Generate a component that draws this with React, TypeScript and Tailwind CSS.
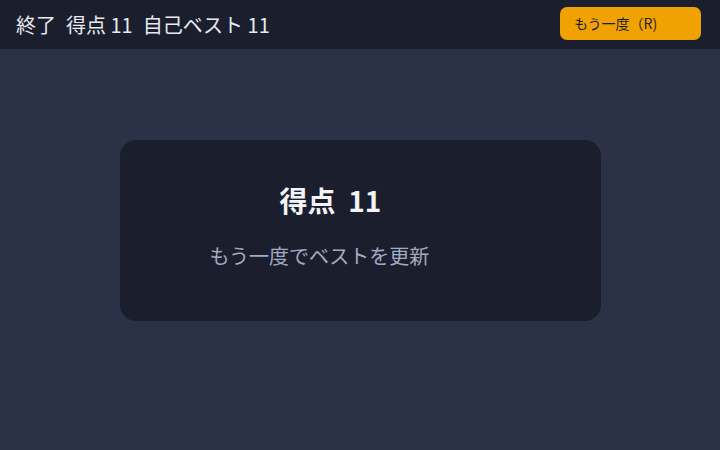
export default function App() {
  const font = { fontFamily: '"Noto Sans CJK JP", "Noto Sans", sans-serif' };
  return (
    <div className="w-[720px] h-[450px] bg-[#2b3248] flex flex-col" style={font}>
      <header className="h-[49px] bg-[#1b1f2d] flex items-center justify-between pl-4 pr-[19px] shrink-0">
        <div className="flex items-center gap-[10px] text-[20px] text-[#e8eaf0] leading-none">
          <span>終了</span>
          <span>得点 11</span>
          <span>自己ベスト 11</span>
        </div>
        <button className="w-[141px] h-[33px] rounded-[7px] bg-[#f0a202] text-[#1b1f2d] text-[14px] text-left pl-[14px] mb-[2px]">
          もう一度（R)
        </button>
      </header>
      <main className="flex-1 flex justify-center pt-[91px]">
        <div className="w-[481px] h-[181px] rounded-[16px] bg-[#1b1f2d] flex flex-col items-start pt-[46px]">
          <div className="ml-[160px] text-[28px] font-bold text-[#f2f4f8] leading-none">得点&nbsp; 11</div>
          <div className="ml-[90px] mt-[32px] text-[20px] text-[#a3abc2] leading-none">もう一度でベストを更新</div>
        </div>
      </main>
    </div>
  );
}
